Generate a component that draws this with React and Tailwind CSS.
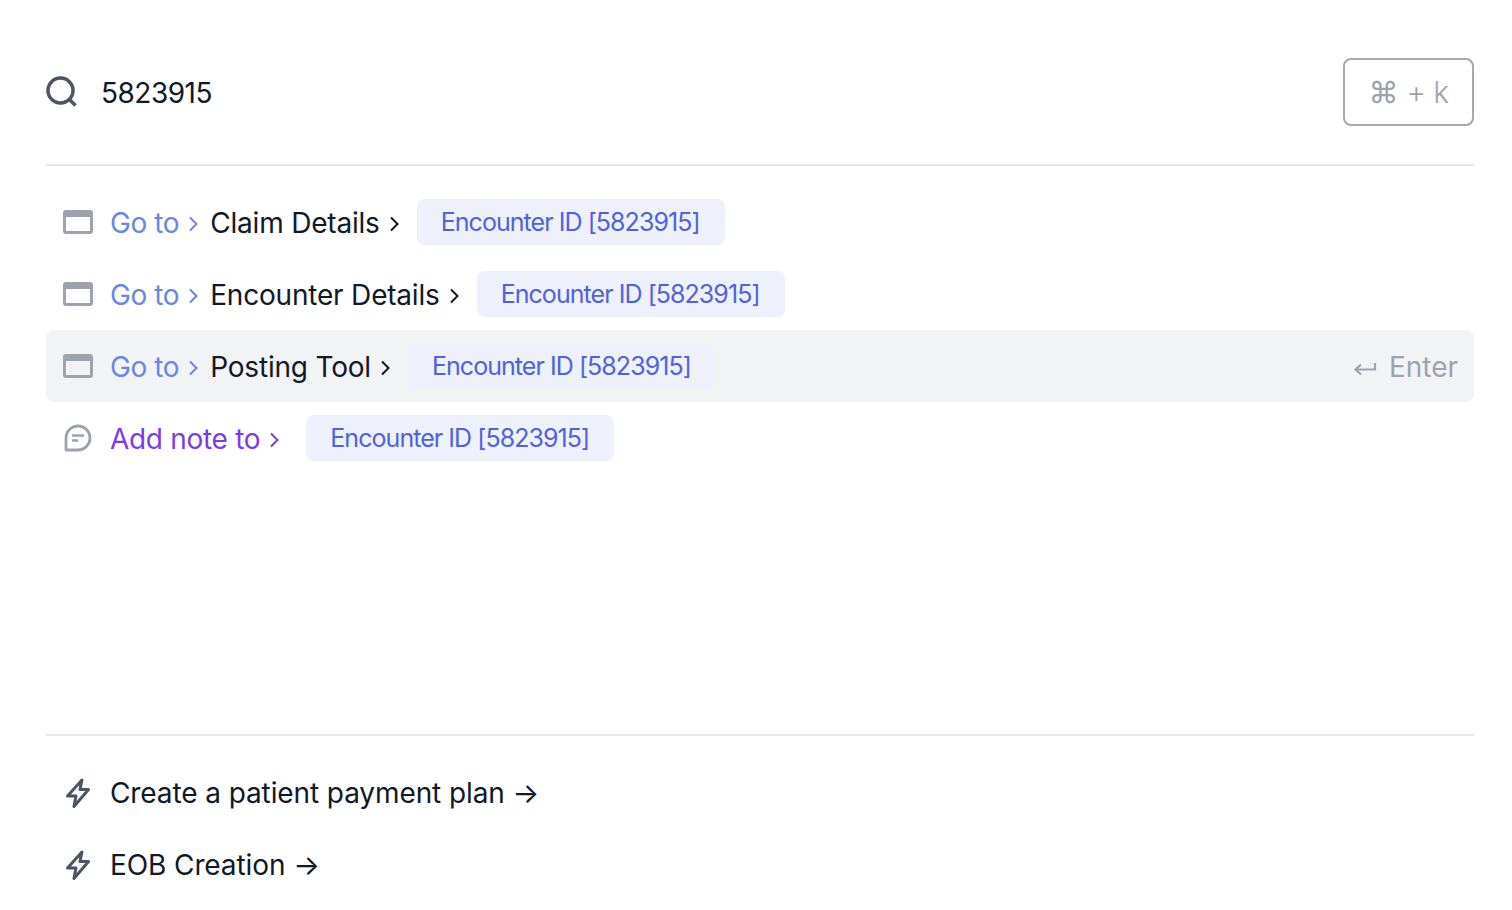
const font = { fontFamily: 'Inter, sans-serif' };

const WindowIcon = () => (
  <svg width="32" height="26" viewBox="0 0 32 26" fill="none" className="shrink-0">
    <rect x="2.500" y="2.500" width="27" height="21" rx="1.500" stroke="#9ca3af" strokeWidth="3" />
    <rect x="2" y="2" width="28" height="6" fill="#9ca3af" />
  </svg>
);

const NoteIcon = () => (
  <svg width="28" height="28" viewBox="0 0 28 28" fill="none" className="shrink-0">
    <path d="M2 26V14a12 12 0 1 1 12 12H2Z" stroke="#9ca3af" strokeWidth="2.800" strokeLinejoin="round" />
    <path d="M8 11.500h12M8 16.500h6" stroke="#9ca3af" strokeWidth="2.500" />
  </svg>
);

const BoltIcon = () => (
  <svg width="24" height="32" viewBox="0 0 24 32" fill="none" className="shrink-0">
    <path d="M16 3L14 12.500H22.500L8 29.500L10 19H1.500Z" stroke="#4b5563" strokeWidth="3" strokeLinejoin="round" />
  </svg>
);

const Chevron = ({ color }) => (
  <svg width="10" height="16" viewBox="0 0 10 16" fill="none" className="mt-[3px] shrink-0">
    <path d="M1 1.500L7.500 8L1 14.500" stroke={color} strokeWidth="2" />
  </svg>
);

const EncounterTag = () => (
  <span className="flex h-[46px] items-center rounded-lg bg-[#eef0fc] pl-6 pr-[25px] pt-[2px] text-[25px] tracking-[-0.95px] text-[#4f63e0]">
    Encounter ID [5823915]
  </span>
);

const GoToRow = ({ label, active }) => (
  <div className={`flex h-[72px] items-center rounded-lg pl-4 pr-4 ${active ? 'bg-[#f2f3f5]' : ''}`}>
    <WindowIcon />
    <span className="ml-[16px] mt-[2px] tracking-[-0.4px] text-[#6b85ea]">Go to</span>
    <span className="ml-[10px]"><Chevron color="#6b85ea" /></span>
    <span className="ml-[11px] mt-[2px] tracking-[-0.2px] text-[#111827]">{label}</span>
    <span className="ml-[10px] mr-[17px]"><Chevron color="#111827" /></span>
    <EncounterTag />
    {active && (
      <span className="ml-auto mt-[2px] flex items-center gap-[12px] tracking-normal text-[#9ca3af]">
        <svg width="24" height="16" viewBox="0 0 24 16" fill="none" className="mt-[2px]">
          <path d="M22 3v6.500H3M8 4.500L2.500 9.500 8 14.500" stroke="#9ca3af" strokeWidth="2.200" />
        </svg>
        Enter
      </span>
    )}
  </div>
);

const ActionRow = ({ label }) => (
  <div className="flex h-[72px] items-center pl-[20px] text-[#111827]">
    <BoltIcon />
    <span className="ml-[20px]">{label} →</span>
  </div>
);

const App = () => {
  return (
    <div className="flex h-[910px] w-[1512px] flex-col overflow-hidden bg-white pl-[46px] pr-[38px] text-[28px] tracking-[-0.1px]" style={font}>
      {/* Search */}
      <div className="flex h-[166px] items-center border-b-2 border-[#e5e7eb] pt-[38px] pb-[18px]">
        <svg width="32" height="32" viewBox="0 0 32 32" fill="none" className="shrink-0">
          <circle cx="14.500" cy="14.500" r="12.500" stroke="#4b5563" strokeWidth="3.500" />
          <path d="M23.500 23.500l6 6" stroke="#4b5563" strokeWidth="3.500" />
        </svg>
        <span className="ml-[23px] mt-[2px] tracking-[-0.5px] text-[#111827]">5823915</span>
        <span className="ml-auto flex h-[68px] w-[131px] items-center justify-center gap-[8px] rounded-lg border-2 border-[#a5a8b3] tracking-normal text-[#9ca3af]">
          <span className="text-[30px] leading-none">⌘</span>
          <span className="text-[30px] font-light tracking-[-0.6px]">+ k</span>
        </span>
      </div>

      {/* Results */}
      <div className="flex h-[570px] flex-col border-b-2 border-[#e5e7eb] pt-[20px]">
        <GoToRow label="Claim Details" />
        <GoToRow label="Encounter Details" />
        <GoToRow label="Posting Tool" active />
        <div className="flex h-[72px] items-center pl-[18px]">
          <NoteIcon />
          <span className="ml-[18px] mt-[2px] tracking-[-0.3px] text-[#7c3aed]">Add note to</span>
          <span className="ml-[10px] mr-[26px]"><Chevron color="#7c3aed" /></span>
          <EncounterTag />
        </div>
      </div>

      {/* Quick actions */}
      <div className="flex flex-col pt-[21px]">
        <ActionRow label="Create a patient payment plan" />
        <ActionRow label="EOB Creation" />
      </div>
    </div>
  );
};

export default App;
